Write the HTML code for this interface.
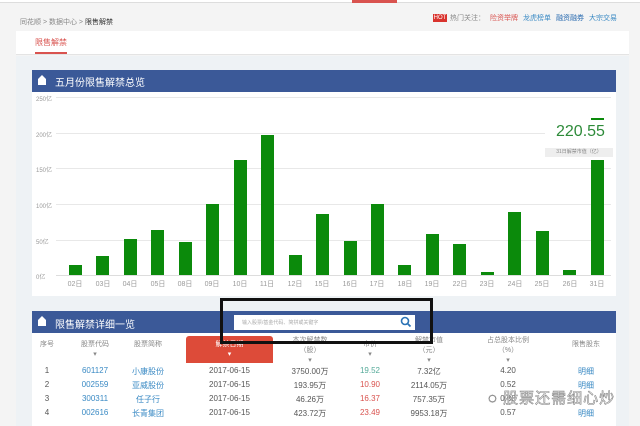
<!DOCTYPE html>
<html><head><meta charset="utf-8"><style>
*{margin:0;padding:0;box-sizing:border-box}
body{width:640px;height:426px;overflow:hidden;background:#f4f4f4;font-family:"Liberation Sans","Noto Sans CJK SC",sans-serif;position:relative;color:#666}
.a{position:absolute;white-space:nowrap}
.bar{position:absolute;width:13px;background:#0b8a0b;bottom:151px}
.xl{position:absolute;top:279px;font-size:7px;color:#999;width:28px;text-align:center}
.yl{position:absolute;left:36px;font-size:6px;color:#999}
.gl{position:absolute;left:56px;width:555px;height:1px;background:#e8e8e8}
.th{position:absolute;top:340px;font-size:7px;color:#888;text-align:center;line-height:10px}
.tr{position:absolute;font-size:8px;color:#555;text-align:center}
.bl{color:#3a8ac4}.rd{color:#d9534f}
</style></head><body>
<div class="a" style="left:0;top:0;width:640px;height:3px;border-bottom:1px solid #ddd;background:#fff"></div>
<div class="a" style="left:352px;top:0;width:45px;height:3px;background:#d9534f"></div>
<div class="a" style="left:20px;top:17px;font-size:7px;color:#888">同花顺 &gt; 数据中心 &gt; <span style="color:#333">限售解禁</span></div>
<div class="a" style="left:433px;top:14px;width:14px;height:8px;background:#d9332e;color:#fff;font-size:6px;line-height:8px;text-align:center">HOT</div>
<div class="a" style="left:450px;top:13px;font-size:7px;color:#888">热门关注：<span class="rd" style="margin-left:5px">险资举牌</span><span class="bl" style="margin-left:5px">龙虎榜单</span><span style="margin-left:5px;color:#2a6bb0">融资融券</span><span class="bl" style="margin-left:5px">大宗交易</span></div>
<div class="a" style="left:16px;top:31px;width:613px;height:24px;background:#fff;border-bottom:1px solid #e4e4e4"></div>
<div class="a" style="left:35px;top:37px;font-size:8px;color:#d9534f">限售解禁</div>
<div class="a" style="left:35px;top:52px;width:32px;height:2px;background:#d9534f"></div>
<div class="a" style="left:16px;top:56px;width:613px;height:370px;background:#eef2f5"></div>
<div class="a" style="left:32px;top:70px;width:584px;height:22px;background:#3b5998"></div>
<svg class="a" style="left:37px;top:74px" width="10" height="12"><path d="M1 5 L5 1 L9 5 V11 H1Z" fill="#fff"/></svg>
<div class="a" style="left:55px;top:74px;font-size:10px;color:#fff">五月份限售解禁总览</div>
<div class="a" style="left:32px;top:92px;width:584px;height:204px;background:#fff"></div>
<div class="gl" style="top:97px"></div><div class="gl" style="top:133px"></div><div class="gl" style="top:168px"></div><div class="gl" style="top:204px"></div><div class="gl" style="top:240px"></div><div class="gl" style="top:275px;background:#ddd"></div>
<div class="yl" style="top:94px">250亿</div><div class="yl" style="top:130px">200亿</div><div class="yl" style="top:165px">150亿</div><div class="yl" style="top:201px">100亿</div><div class="yl" style="top:237px">50亿</div><div class="yl" style="top:272px">0亿</div>
<div class="bar" style="left:69px;height:10px"></div><div class="xl" style="left:61px">02日</div>
<div class="bar" style="left:96px;height:19px"></div><div class="xl" style="left:89px">03日</div>
<div class="bar" style="left:124px;height:36px"></div><div class="xl" style="left:116px">04日</div>
<div class="bar" style="left:151px;height:45px"></div><div class="xl" style="left:144px">05日</div>
<div class="bar" style="left:179px;height:33px"></div><div class="xl" style="left:171px">08日</div>
<div class="bar" style="left:206px;height:71px"></div><div class="xl" style="left:198px">09日</div>
<div class="bar" style="left:234px;height:115px"></div><div class="xl" style="left:226px">10日</div>
<div class="bar" style="left:261px;height:140px"></div><div class="xl" style="left:253px">11日</div>
<div class="bar" style="left:289px;height:20px"></div><div class="xl" style="left:281px">12日</div>
<div class="bar" style="left:316px;height:61px"></div><div class="xl" style="left:308px">15日</div>
<div class="bar" style="left:344px;height:34px"></div><div class="xl" style="left:336px">16日</div>
<div class="bar" style="left:371px;height:71px"></div><div class="xl" style="left:363px">17日</div>
<div class="bar" style="left:398px;height:10px"></div><div class="xl" style="left:391px">18日</div>
<div class="bar" style="left:426px;height:41px"></div><div class="xl" style="left:418px">19日</div>
<div class="bar" style="left:453px;height:31px"></div><div class="xl" style="left:446px">22日</div>
<div class="bar" style="left:481px;height:3px"></div><div class="xl" style="left:473px">23日</div>
<div class="bar" style="left:508px;height:63px"></div><div class="xl" style="left:501px">24日</div>
<div class="bar" style="left:536px;height:44px"></div><div class="xl" style="left:528px">25日</div>
<div class="bar" style="left:563px;height:5px"></div><div class="xl" style="left:556px">26日</div>
<div class="bar" style="left:591px;height:157px"></div><div class="xl" style="left:583px">31日</div>
<div class="a" style="left:545px;top:120px;width:68px;height:40px;background:#fff"></div>
<div class="a" style="left:556px;top:123px;font-size:16px;color:#2e8b3a">220.55</div>
<div class="a" style="left:545px;top:148px;width:68px;height:9px;background:#eee;font-size:5px;color:#888;text-align:center;line-height:9px">31日解禁市值（亿）</div>
<div class="a" style="left:32px;top:311px;width:584px;height:22px;background:#3b5998"></div>
<svg class="a" style="left:37px;top:315px" width="10" height="12"><path d="M1 5 L5 1 L9 5 V11 H1Z" fill="#fff"/></svg>
<div class="a" style="left:55px;top:316px;font-size:10px;color:#fff">限售解禁详细一览</div>
<div class="a" style="left:234px;top:315px;width:181px;height:15px;background:#fff;font-size:5px;color:#aaa;padding:4px 8px">输入股票/基金代码、简拼或关键字</div>
<svg class="a" style="left:400px;top:316px" width="12" height="12"><circle cx="5" cy="5" r="3.5" stroke="#2a72b5" stroke-width="1.6" fill="none"/><path d="M7.5 7.5 L10.5 10.5" stroke="#2a72b5" stroke-width="1.8"/></svg>
<div class="a" style="left:32px;top:333px;width:584px;height:93px;background:#fff"></div>
<div class="a" style="left:186px;top:336px;width:87px;height:27px;background:#dd4b39;border-radius:3px 3px 0 0"></div>
<div class="th" style="left:35px;width:24px">序号</div>
<div class="th" style="left:75px;width:40px">股票代码<br>▾</div>
<div class="th" style="left:128px;width:40px">股票简称</div>
<div class="th" style="left:186px;width:87px;color:#fff">解禁日期<br>▾</div>
<div class="th" style="left:285px;width:50px;top:336px">本次解禁数<br>（股）<br>▾</div>
<div class="th" style="left:350px;width:40px">市价<br>▾</div>
<div class="th" style="left:400px;width:58px;top:336px">解禁市值<br>（元）<br>▾</div>
<div class="th" style="left:478px;width:60px;top:336px">占总股本比例<br>（%）<br>▾</div>
<div class="th" style="left:566px;width:40px">限售股东</div>
<div class="tr" style="top:366px;left:35px;width:24px">1</div><div class="tr bl" style="top:366px;left:75px;width:40px">601127</div><div class="tr bl" style="top:366px;left:128px;width:40px">小康股份</div><div class="tr" style="top:366px;left:186px;width:87px">2017-06-15</div><div class="tr" style="top:366px;left:285px;width:50px">3750.00万</div><div class="tr" style="top:366px;left:350px;width:40px;color:#5a9">19.52</div><div class="tr" style="top:366px;left:400px;width:58px">7.32亿</div><div class="tr" style="top:366px;left:478px;width:60px">4.20</div><div class="tr bl" style="top:366px;left:566px;width:40px">明细</div>
<div class="tr" style="top:380px;left:35px;width:24px">2</div><div class="tr bl" style="top:380px;left:75px;width:40px">002559</div><div class="tr bl" style="top:380px;left:128px;width:40px">亚威股份</div><div class="tr" style="top:380px;left:186px;width:87px">2017-06-15</div><div class="tr" style="top:380px;left:285px;width:50px">193.95万</div><div class="tr rd" style="top:380px;left:350px;width:40px">10.90</div><div class="tr" style="top:380px;left:400px;width:58px">2114.05万</div><div class="tr" style="top:380px;left:478px;width:60px">0.52</div><div class="tr bl" style="top:380px;left:566px;width:40px">明细</div>
<div class="tr" style="top:394px;left:35px;width:24px">3</div><div class="tr bl" style="top:394px;left:75px;width:40px">300311</div><div class="tr bl" style="top:394px;left:128px;width:40px">任子行</div><div class="tr" style="top:394px;left:186px;width:87px">2017-06-15</div><div class="tr" style="top:394px;left:285px;width:50px">46.26万</div><div class="tr rd" style="top:394px;left:350px;width:40px">16.37</div><div class="tr" style="top:394px;left:400px;width:58px">757.35万</div><div class="tr" style="top:394px;left:478px;width:60px">0.08</div>
<div class="tr" style="top:408px;left:35px;width:24px">4</div><div class="tr bl" style="top:408px;left:75px;width:40px">002616</div><div class="tr bl" style="top:408px;left:128px;width:40px">长青集团</div><div class="tr" style="top:408px;left:186px;width:87px">2017-06-15</div><div class="tr" style="top:408px;left:285px;width:50px">423.72万</div><div class="tr rd" style="top:408px;left:350px;width:40px">23.49</div><div class="tr" style="top:408px;left:400px;width:58px">9953.18万</div><div class="tr" style="top:408px;left:478px;width:60px">0.57</div><div class="tr bl" style="top:408px;left:566px;width:40px">明细</div>
<div class="a" style="left:488px;top:387px;font-size:15px;color:#fff;-webkit-text-stroke:0.6px #888;letter-spacing:1px">◌ 股票还需细心炒</div>
<div class="a" style="left:220px;top:298px;width:213px;height:46px;border:3px solid #111"></div>
</body></html>
